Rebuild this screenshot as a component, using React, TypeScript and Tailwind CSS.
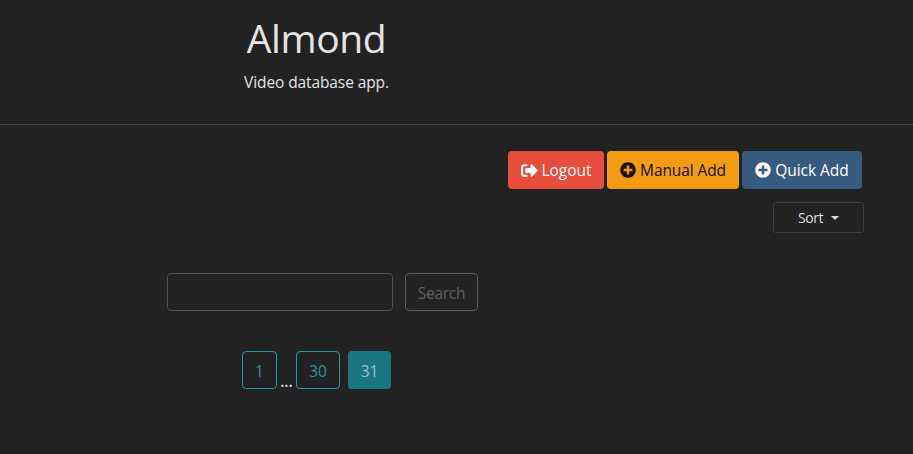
import { FaPlusCircle, FaSignOutAlt } from "react-icons/fa";

const button =
  "flex h-[38px] shrink-0 items-center justify-center gap-1 whitespace-nowrap rounded-[4px] leading-6";

function Header() {
  return (
    <header className="h-[125px] border-b border-[#3d3d3d] pt-[14px]">
      <div className="flex w-[633px] flex-col items-center">
        <h1 className="text-[39px] leading-[48px] tracking-[-0.4px] text-[#e4e4e4]">Almond</h1>
        <p className="mt-2 text-[15.5px] leading-6 tracking-[-0.1px] text-[#e4e4e4]">
          Video database app.
        </p>
      </div>
    </header>
  );
}

function Actions() {
  return (
    <div className="flex gap-[3px] pl-[508px] pt-[26px]">
      <button className={`${button} w-[96px] bg-[#e74c3c] text-white`}>
        <FaSignOutAlt size={17} />
        <span className="tracking-[-0.05px]">Logout</span>
      </button>
      <button className={`${button} w-[132px] bg-[#f39c12] text-[#15110a]`}>
        <FaPlusCircle size={16} />
        <span className="tracking-[-0.1px]">Manual Add</span>
      </button>
      <button className={`${button} w-[120px] bg-[#375a7f] text-white`}>
        <FaPlusCircle size={16} />
        <span className="tracking-[-0.05px]">Quick Add</span>
      </button>
    </div>
  );
}

function SortMenu() {
  return (
    <button className="ml-[773px] mt-[13px] flex h-[31px] w-[91px] items-center justify-center gap-2 rounded-[3px] border border-[#3d3d3d] text-[14px] leading-5 text-[#dedede]">
      <span className="tracking-[-0.4px]">Sort</span>
      <span className="border-x-4 border-t-4 border-x-transparent border-t-[#dedede]" />
    </button>
  );
}

function SearchForm() {
  return (
    <form className="ml-[167px] mt-[40px] flex gap-3">
      <input
        aria-label="Search"
        className="h-[38px] w-[226px] rounded-[4px] border border-[#505050] bg-transparent px-3 text-white outline-none"
      />
      <button type="button" className={`${button} w-[73px] border border-[#5c5c5c] pt-[2px] text-[#606060]`}>
        <span className="tracking-[-0.3px]">Search</span>
      </button>
    </form>
  );
}

function Pagination() {
  return (
    <nav className="ml-[242px] mt-[40px] flex">
      <button className={`${button} w-[35px] border border-[#1f9cab] pt-[2px] text-[#2299a4]`}>1</button>
      <span className="w-[19px] pt-[18px] text-center font-semibold leading-6 text-[#dedede]">...</span>
      <button className={`${button} w-[44px] border border-[#1f9cab] pt-[2px] text-[#2299a4]`}>30</button>
      <button className={`${button} ml-2 w-[43px] bg-[#1a7583] pt-[2px] text-[#a3bfc4]`}>31</button>
    </nav>
  );
}

export default function App() {
  return (
    <div className="min-h-screen w-full bg-[#222222] font-['Open_Sans','Noto_Sans',sans-serif] text-[15.5px]">
      <Header />
      <main>
        <Actions />
        <SortMenu />
        <SearchForm />
        <Pagination />
      </main>
    </div>
  );
}
